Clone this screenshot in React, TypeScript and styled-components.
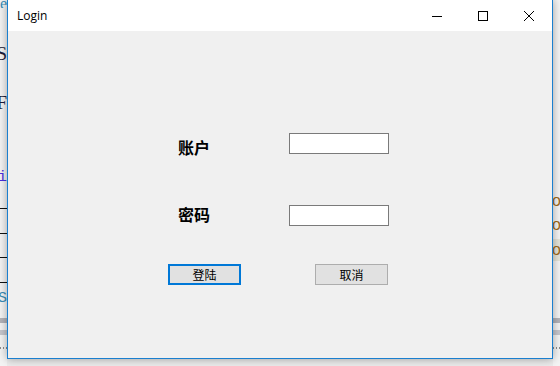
import React from "react"
import styled, {createGlobalStyle} from 'styled-components'

const GlobalStyle = createGlobalStyle`
  html, body {
    margin: 0;
    padding: 0;
    background: #e9e9e9;
  }
  * {
    box-sizing: border-box;
  }
`;

const Desktop = styled.div`
  width: 560px;
  height: 366px;
  overflow: hidden;
  display: flex;
  background: #ececec;
`;

const Strip = styled.div`
  width: 7px;
  flex: none;
  display: flex;
  flex-direction: column;
  overflow: hidden;
  background: #f4f4f4;
`;

const Fragment = styled.div<{h: number; color?: string; bg?: string; align?: string}>`
  height: ${p => p.h}px;
  flex: none;
  display: flex;
  align-items: center;
  justify-content: ${p => p.align || 'flex-end'};
  white-space: nowrap;
  overflow: hidden;
  color: ${p => p.color || '#1b1b3a'};
  background: ${p => p.bg || 'transparent'};
  font-family: "Liberation Serif", serif;
  font-size: 19px;
  line-height: 1;
`;

const CodeFragment = styled(Fragment)`
  font-family: "Liberation Mono", monospace;
  font-size: 15px;
`;

const Tail = styled.span`
  margin-left: -1px;
  font-family: "Liberation Sans", sans-serif;
  font-size: 16px;
`;

const Rule = styled.div`
  height: 1px;
  flex: none;
  background: #111;
`;

const Bar = styled.div<{shade: string}>`
  height: 5px;
  flex: none;
  background: ${p => p.shade};
`;

const Dots = styled.div`
  height: 2px;
  flex: none;
  background: repeating-linear-gradient(90deg, #8a8a8a 0 1px, transparent 1px 3px);
`;

const Gap = styled.div<{h: number}>`
  height: ${p => p.h}px;
  flex: none;
`;

const Window = styled.div`
  width: 546px;
  height: 360px;
  margin-top: -1px;
  flex: none;
  display: flex;
  flex-direction: column;
  border: 1px solid #1a7fcf;
  background: #f0f0f0;
  box-shadow: 0 0 9px rgba(0, 0, 0, 0.35);
  position: relative;
  z-index: 1;
`;

const TitleBar = styled.div`
  height: 31px;
  flex: none;
  display: flex;
  align-items: center;
  background: #fff;
`;

const Title = styled.div`
  flex: 1;
  padding-left: 9px;
  font-family: "Open Sans", "Noto Sans", sans-serif;
  font-size: 12px;
  color: #000;
`;

const CaptionButton = styled.div`
  width: 46px;
  height: 31px;
  display: flex;
  align-items: center;
  justify-content: center;
`;

const Client = styled.div`
  flex: 1;
  padding: 102px 0 0 160px;
  display: flex;
  flex-direction: column;
`;

const FieldRow = styled.div<{space: number}>`
  display: flex;
  align-items: center;
  height: 21px;
  margin-bottom: ${p => p.space}px;
`;

const Label = styled.div<{shift: number}>`
  width: 121px;
  padding-left: 10px;
  font-family: "Noto Sans CJK SC", sans-serif;
  font-weight: 700;
  font-size: 16px;
  line-height: 1;
  color: #000;
  transform: translateY(${p => p.shift}px);
`;

const TextBox = styled.input`
  width: 100px;
  height: 21px;
  margin: 0;
  padding: 0 2px;
  border: 1px solid #7a7a7a;
  background: #fff;
  outline: none;
`;

const ButtonRow = styled.div`
  display: flex;
  gap: 74px;
`;

const Button = styled.button<{active?: boolean}>`
  width: 73px;
  height: 21px;
  margin: 0;
  padding: 0;
  border: ${p => p.active ? '2px solid #0078d7' : '1px solid #adadad'};
  background: #e1e1e1;
  font-family: "Noto Sans CJK SC", sans-serif;
  font-size: 12px;
  line-height: 1;
  color: #000;
`;

const App = () => {
    return (
        <Desktop>
            <GlobalStyle/>
            <Strip>
                <Fragment h={8} color="#3a8db8" style={{fontSize: 16}}>e</Fragment>
                <Gap h={37}/>
                <Fragment h={16}>S</Fragment>
                <Gap h={34}/>
                <Fragment h={14}>F</Fragment>
                <Gap h={60}/>
                <CodeFragment h={17} color="#4a2ee0">i</CodeFragment>
                <Gap h={22}/>
                <Rule/>
                <Gap h={24}/>
                <Rule/>
                <Gap h={23}/>
                <Rule/>
                <Gap h={24}/>
                <Rule/>
                <Gap h={7}/>
                <CodeFragment h={16} color="#3a8db8">S</CodeFragment>
                <Gap h={12}/>
                <Bar shade="#b3b3b9"/>
                <Gap h={7}/>
                <Bar shade="#c6c6cc"/>
                <Gap h={12}/>
                <Dots/>
            </Strip>
            <Window>
                <TitleBar>
                    <Title>Login</Title>
                    <CaptionButton>
                        <svg width="10" height="10" viewBox="0 0 10 10">
                            <path d="M0 5.5H10" stroke="#000" strokeWidth="1"/>
                        </svg>
                    </CaptionButton>
                    <CaptionButton>
                        <svg width="10" height="10" viewBox="0 0 10 10">
                            <rect x="0.5" y="0.5" width="9" height="9" fill="none" stroke="#000" strokeWidth="1"/>
                        </svg>
                    </CaptionButton>
                    <CaptionButton>
                        <svg width="10" height="10" viewBox="0 0 10 10">
                            <path d="M0 0L10 10M10 0L0 10" stroke="#000" strokeWidth="1"/>
                        </svg>
                    </CaptionButton>
                </TitleBar>
                <Client>
                    <FieldRow space={51}>
                        <Label shift={3}>账户</Label>
                        <TextBox type="text"/>
                    </FieldRow>
                    <FieldRow space={38}>
                        <Label shift={-2}>密码</Label>
                        <TextBox type="password"/>
                    </FieldRow>
                    <ButtonRow>
                        <Button active>登陆</Button>
                        <Button>取消</Button>
                    </ButtonRow>
                </Client>
            </Window>
            <Strip>
                <Gap h={193}/>
                <Fragment h={16} align="flex-start" color="#a06a1a">
                    <Tail>o</Tail>
                </Fragment>
                <Gap h={8}/>
                <Fragment h={16} align="flex-start" color="#a06a1a">
                    <Tail>o</Tail>
                </Fragment>
                <Gap h={6}/>
                <Fragment h={22} align="flex-start" color="#a06a1a" bg="#e4e4d8">
                    <Tail>o</Tail>
                </Fragment>
                <Gap h={57}/>
                <Bar shade="#b3b3b9"/>
                <Gap h={7}/>
                <Bar shade="#c6c6cc"/>
                <Gap h={12}/>
                <Dots/>
            </Strip>
        </Desktop>
    )
};

export default App
